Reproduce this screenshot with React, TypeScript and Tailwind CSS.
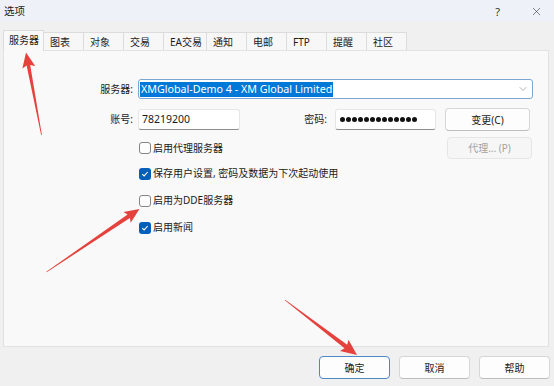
import React from "react";
import { X, ChevronDown } from "lucide-react";

function Check({ checked }: { checked: boolean }) {
  return checked ? (
    <span className="w-[12px] h-[12px] rounded-[3px] bg-[#005fb8] flex items-center justify-center shrink-0">
      <svg width="8" height="8" viewBox="0 0 8 8">
        <path d="M1.3 4.2 L3.1 5.9 L6.7 2" stroke="white" strokeWidth="1.1" fill="none" />
      </svg>
    </span>
  ) : (
    <span className="w-[12px] h-[12px] rounded-[3px] border border-[#858585] bg-[#fdfdfd] shrink-0" />
  );
}

function arrowPoints(x1: number, y1: number, x2: number, y2: number, headLen: number, headHalf: number, shaftHalf: number) {
  const dx = x2 - x1;
  const dy = y2 - y1;
  const len = Math.sqrt(dx * dx + dy * dy);
  const ux = dx / len;
  const uy = dy / len;
  const nx = -uy;
  const ny = ux;
  const bx = x2 - ux * headLen;
  const by = y2 - uy * headLen;
  const cx = x2 - ux * (headLen + 2);
  const cy = y2 - uy * (headLen + 2);
  const pts = [
    [x1 + nx * 0.4, y1 + ny * 0.4],
    [bx + nx * shaftHalf, by + ny * shaftHalf],
    [cx + nx * headHalf, cy + ny * headHalf],
    [x2, y2],
    [cx - nx * headHalf, cy - ny * headHalf],
    [bx - nx * shaftHalf, by - ny * shaftHalf],
    [x1 - nx * 0.4, y1 - ny * 0.4],
  ];
  return pts.map((p) => `${p[0].toFixed(1)},${p[1].toFixed(1)}`).join(" ");
}

const tabs = [
  { label: "图表", w: "w-[40px]" },
  { label: "对象", w: "w-[40px]" },
  { label: "交易", w: "w-[40px]" },
  { label: "EA交易", w: "w-[43px]" },
  { label: "通知", w: "w-[40px]" },
  { label: "电邮", w: "w-[40px]" },
  { label: "FTP", w: "w-[40px]" },
  { label: "提醒", w: "w-[40px]" },
  { label: "社区", w: "w-[40px]" },
];

export default function App() {
  return (
    <div className="relative w-[554px] h-[386px] overflow-hidden bg-[#f0f0f0] text-[10px] text-[#1a1a1a] font-['Noto_Sans','Noto_Sans_CJK_SC',sans-serif] flex flex-col">
      {/* title bar */}
      <div className="h-[22px] bg-[#eef2f8] flex items-center pl-[4px] shrink-0">
        <span className="text-[10.5px] leading-none">选项</span>
        <span className="ml-auto text-[11px] leading-none mr-[30px] text-[#333]">?</span>
        <X size={13} strokeWidth={1.1} className="mr-[11px] text-[#333]" />
      </div>

      {/* tabs */}
      <div className="h-[28px] flex items-end pl-[3px] shrink-0">
        <div className="relative z-10 w-[41px] h-[21px] -mb-px bg-[#f9f9f9] border border-b-0 border-[#dcdcdc] pl-[5px] pt-[4px] leading-none">
          服务器
        </div>
        {tabs.map((t) => (
          <div
            key={t.label}
            className={`${t.w} h-[18px] bg-[#f7f7f7] border border-l-0 border-b-0 border-[#dcdcdc] pl-[6px] flex items-center leading-none`}
          >
            {t.label}
          </div>
        ))}
      </div>

      {/* panel */}
      <div className="ml-[3px] w-[546px] h-[297px] bg-[#f9f9f9] border border-[#e2e2e2] flex flex-col pt-[28px] shrink-0">
        {/* server row */}
        <div className="flex items-center h-[20px]">
          <span className="w-[130px] text-right pr-[1px]">服务器:</span>
          <div className="ml-[4px] w-[395px] h-[20px] bg-white border border-[#7ea6d4] rounded-[3px] flex items-center pl-[1px]">
            <span className="bg-[#0078d7] text-white px-[1px] leading-[15px] text-[10.7px]">XMGlobal-Demo 4 - XM Global Limited</span>
            <ChevronDown size={12} strokeWidth={1} className="ml-auto mr-[3px] text-[#666]" />
          </div>
        </div>

        {/* account row */}
        <div className="flex items-center h-[23px] mt-[9px]">
          <span className="w-[130px] text-right pr-[1px]">账号:</span>
          <div className="ml-[4px] w-[102px] h-[21px] bg-white border border-[#e6e6e6] border-b-[#8d8d8d] rounded-[3px] flex items-center pl-[3px] text-[10.5px]">
            78219200
          </div>
          <span className="w-[88px] text-right pr-[1px]">密码:</span>
          <div className="ml-[7px] w-[101px] h-[21px] bg-white border border-[#e6e6e6] border-b-[#8d8d8d] rounded-[3px] flex items-center pl-[4px] gap-[1px]">
            {Array.from({ length: 13 }).map((_, i) => (
              <span key={i} className="w-[5px] h-[5px] rounded-full bg-[#111]" />
            ))}
          </div>
          <button className="ml-[9px] w-[85px] h-[23px] bg-[#fdfdfd] border border-[#d6d6d6] border-b-[#bdbdbd] rounded-[4px] flex items-center justify-center leading-none">
            变更(C)
          </button>
        </div>

        {/* proxy row */}
        <div className="flex items-center h-[22px] mt-[6px]">
          <div className="ml-[135px] flex items-center gap-[2px]">
            <Check checked={false} />
            <span>启用代理服务器</span>
          </div>
          <button className="ml-auto mr-[16px] w-[85px] h-[22px] bg-[#f6f6f6] border border-[#e6e6e6] rounded-[4px] flex items-center justify-center leading-none text-[#a3a3a3]">
            代理... (P)
          </button>
        </div>

        <div className="flex items-center h-[27px] mt-[1px] pl-[135px] gap-[2px]">
          <Check checked={true} />
          <span>保存用户设置, 密码及数据为下次起动使用</span>
        </div>
        <div className="flex items-center h-[27px] pl-[135px] gap-[2px]">
          <Check checked={false} />
          <span>启用为DDE服务器</span>
        </div>
        <div className="flex items-center h-[27px] pl-[135px] gap-[2px]">
          <Check checked={true} />
          <span>启用新闻</span>
        </div>
      </div>

      {/* buttons */}
      <div className="flex justify-end gap-[9px] pr-[4px] mt-[9px]">
        <button className="w-[71px] h-[23px] bg-[#fdfdfd] border border-[#4f86c6] rounded-[4px] flex items-center justify-center leading-none">
          确定
        </button>
        <button className="w-[71px] h-[23px] bg-[#fdfdfd] border border-[#d6d6d6] border-b-[#bdbdbd] rounded-[4px] flex items-center justify-center leading-none">
          取消
        </button>
        <button className="w-[71px] h-[23px] bg-[#fdfdfd] border border-[#d6d6d6] border-b-[#bdbdbd] rounded-[4px] flex items-center justify-center leading-none">
          帮助
        </button>
      </div>

      {/* annotation arrows */}
      <svg className="absolute inset-0 pointer-events-none" width="554" height="386">
        <polygon fill="#e6423d" points={arrowPoints(41.5, 135, 26, 52.5, 13, 6.5, 1.8)} />
        <polygon fill="#e6423d" points={arrowPoints(46.5, 272, 139.5, 209, 13, 6.5, 2)} />
        <polygon fill="#e6423d" points={arrowPoints(285, 300, 357, 355, 14, 7, 2.2)} />
      </svg>
    </div>
  );
}
